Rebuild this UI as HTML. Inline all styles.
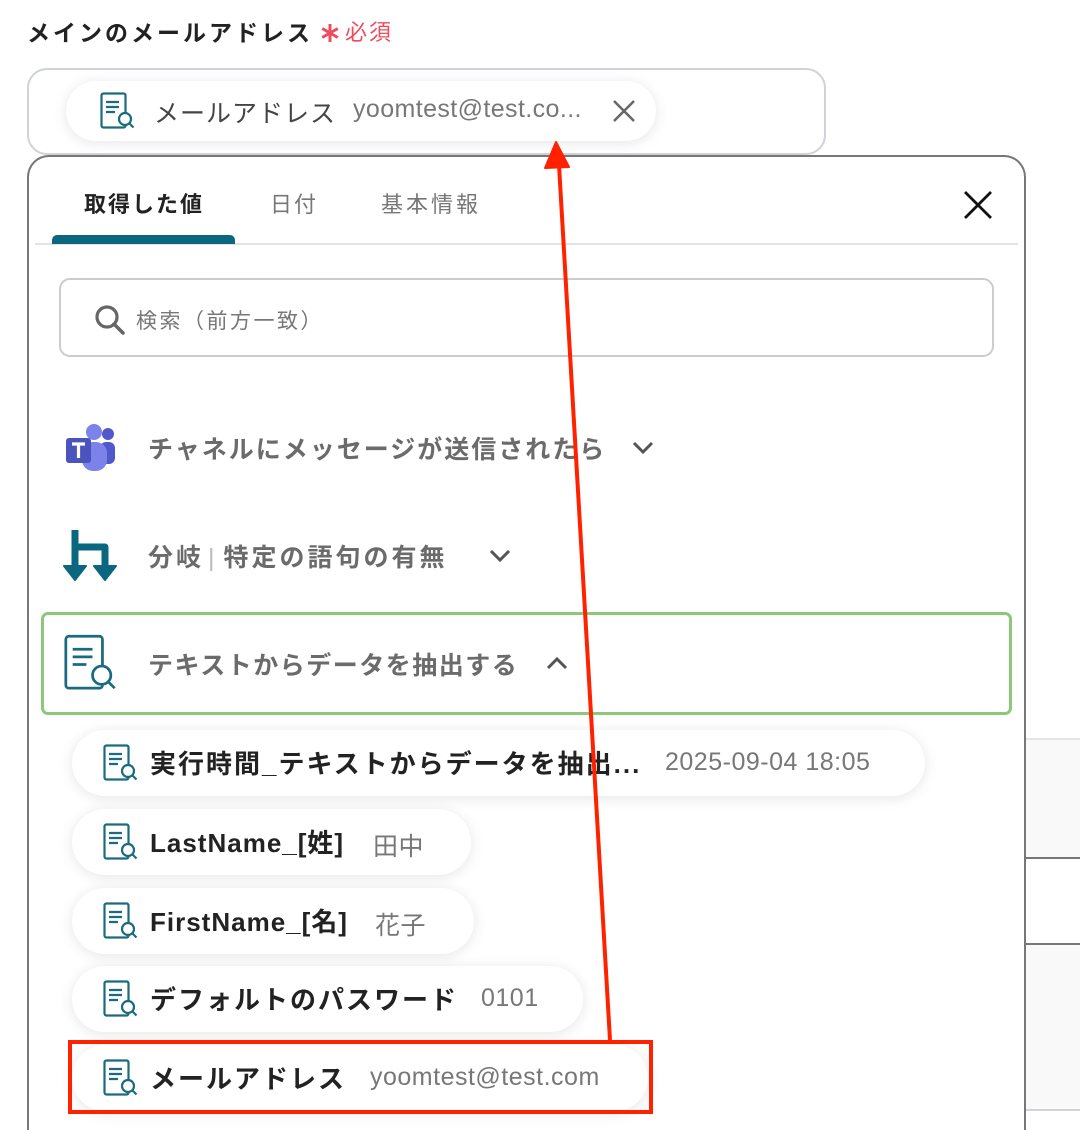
<!DOCTYPE html>
<html style="overflow:hidden"><head><meta charset="utf-8">
<style>
*{margin:0;padding:0;box-sizing:border-box}
html,body{width:1080px;height:1130px;overflow:hidden}
body{background:#fff;position:relative;font-family:"Liberation Sans","Noto Sans CJK JP",sans-serif;color:#222}
.a{position:absolute;white-space:nowrap}
.chip{position:absolute;background:#fff;border-radius:34px;box-shadow:0 2px 14px rgba(0,0,0,.10);height:66px}
.chip svg{position:absolute;left:31px;top:14px}
.chip .t{position:absolute;left:78px;top:14px;font-size:26px;font-weight:bold;color:#222;letter-spacing:2px}
.chip .v{position:absolute;top:18px;font-size:25px;color:#777;letter-spacing:.5px}
.row{position:absolute;font-size:25px;font-weight:bold;color:#6b6b6b;letter-spacing:2px}
</style></head><body>
<svg width="0" height="0" style="position:absolute"><defs>
<symbol id="doc" viewBox="0 0 36 38"><rect x="1.5" y="1.5" width="24" height="34" rx="2" fill="none" stroke="#1a6b80" stroke-width="2.2"/><path d="M6 10h13M6 15h13M6 20h9" stroke="#1a6b80" stroke-width="2.2"/><circle cx="25" cy="27" r="6" fill="#fff" stroke="#1a6b80" stroke-width="2.2"/><path d="M29.5 31.5l4 4" stroke="#1a6b80" stroke-width="2.2"/></symbol>
</defs></svg>

<div class="a" style="left:1025px;top:738px;width:55px;height:120px;background:#f9f9f9;border-top:2px solid #e5e5e5"></div>
<div class="a" style="left:1025px;top:857px;width:55px;height:2px;background:#777"></div>
<div class="a" style="left:1025px;top:943px;width:55px;height:168px;background:#f9f9f9;border-top:2px solid #777;border-bottom:2px solid #d0d4da"></div>

<div class="a" style="left:27px;top:14px;font-size:23px;font-weight:bold;color:#222;letter-spacing:3px">メインのメールアドレス</div>
<svg class="a" style="left:320px;top:23px" width="20" height="20" viewBox="0 0 20 20"><path d="M10 1v18M2.2 5.5l15.6 9M2.2 14.5l15.6-9" stroke="#f04b5c" stroke-width="3"/></svg>
<div class="a" style="left:345px;top:15px;color:#f04b5c;font-size:22px;letter-spacing:2px">必須</div>

<div class="a" style="left:27px;top:68px;width:799px;height:87px;border:2px solid #cfd3d8;border-radius:20px"></div>
<div class="chip" style="left:66px;top:81px;width:590px;height:60px;border-radius:30px">
<svg width="36" height="38" style="left:34px;top:11px"><use href="#doc"/></svg>
<div class="a" style="left:88px;top:13px;font-size:25px;color:#444;letter-spacing:1px">メールアドレス</div>
<div class="a" style="left:287px;top:14px;font-size:25px;color:#777;letter-spacing:.4px">yoomtest@test.co...</div>
<svg class="a" style="left:546px;top:18px" width="24" height="24"><path d="M2 2L22 22M22 2L2 22" stroke="#666" stroke-width="2.5"/></svg>
</div>

<div class="a" style="left:27px;top:155px;width:999px;height:990px;border:2px solid #777;border-bottom:none;border-radius:22px 22px 0 0"></div>
<div class="a" style="left:84px;top:187px;font-size:22px;font-weight:bold;color:#222;letter-spacing:2px">取得した値</div>
<div class="a" style="left:270px;top:187px;font-size:22px;color:#777;letter-spacing:2px">日付</div>
<div class="a" style="left:381px;top:187px;font-size:22px;color:#777;letter-spacing:3px">基本情報</div>
<div class="a" style="left:35px;top:243px;width:983px;height:2px;background:#e3e3e3"></div>
<div class="a" style="left:52px;top:235px;width:183px;height:9px;background:#0b6780;border-radius:5px 5px 0 0"></div>
<svg class="a" style="left:963px;top:190px" width="30" height="30"><path d="M2 2L28 28M28 2L2 28" stroke="#111" stroke-width="2.8"/></svg>

<div class="a" style="left:59px;top:278px;width:935px;height:79px;border:2px solid #ccc;border-radius:11px"></div>
<svg class="a" style="left:93px;top:303px" width="34" height="34"><circle cx="14" cy="14" r="10" fill="none" stroke="#666" stroke-width="3.2"/><path d="M21 21l9 9" stroke="#666" stroke-width="3.6" stroke-linecap="round"/></svg>
<div class="a" style="left:136px;top:305px;font-size:21px;color:#777;letter-spacing:2.5px">検索（前方一致）</div>

<svg class="a" style="left:64px;top:424px" width="52" height="48" viewBox="0 0 52 48">
<circle cx="44" cy="10" r="6" fill="#5059c9"/><rect x="36" y="18" width="15" height="22" rx="6" fill="#5059c9"/>
<circle cx="30" cy="8" r="8" fill="#7b83eb"/><rect x="18" y="18" width="25" height="29" rx="11" fill="#7b83eb"/>
<rect x="2" y="14" width="25" height="25" rx="3" fill="#4b53bc"/><path d="M8 20h13M14.5 20v14" stroke="#fff" stroke-width="3.2"/>
</svg>
<div class="row" style="left:148px;top:430px">チャネルにメッセージが送信されたら</div>
<svg class="a" style="left:632px;top:440px" width="22" height="16"><path d="M2 3l9 9 9-9" fill="none" stroke="#555" stroke-width="3"/></svg>

<svg class="a" style="left:63px;top:528px" width="54" height="54" viewBox="0 0 54 54">
<path d="M12 2v40M12 19h30v23" fill="none" stroke="#0b6780" stroke-width="7" stroke-linejoin="round"/>
<path d="M1 38h22l-11 14zM31 38h22l-11 14z" fill="#0b6780" stroke="#0b6780" stroke-width="2" stroke-linejoin="round"/>
</svg>
<div class="row" style="left:148px;top:538px;letter-spacing:3px">分岐<span style="font-weight:normal;color:#bbb;margin:0 6px 0 4px">|</span>特定の語句の有無</div>
<svg class="a" style="left:489px;top:548px" width="22" height="16"><path d="M2 3l9 9 9-9" fill="none" stroke="#555" stroke-width="3"/></svg>

<div class="a" style="left:41px;top:612px;width:971px;height:103px;border:3px solid #8bc87a;border-radius:7px"></div>
<svg class="a" style="left:63px;top:634px" width="56" height="58" viewBox="0 0 36 38"><rect x="1.5" y="1.5" width="24" height="34" rx="2" fill="none" stroke="#1a6b80" stroke-width="1.8"/><path d="M6 10h13M6 15h13M6 20h9" stroke="#1a6b80" stroke-width="1.8"/><circle cx="25" cy="27" r="6" fill="#fff" stroke="#1a6b80" stroke-width="1.8"/><path d="M29.5 31.5l4 4" stroke="#1a6b80" stroke-width="1.8"/></svg>
<div class="row" style="left:148px;top:646px;letter-spacing:1.5px">テキストからデータを抽出する</div>
<svg class="a" style="left:546px;top:655px" width="22" height="16"><path d="M2 13l9-9 9 9" fill="none" stroke="#555" stroke-width="3"/></svg>

<div class="chip" style="left:72px;top:730px;width:853px"><svg width="36" height="38"><use href="#doc"/></svg><div class="t">実行時間_テキストからデータを抽出...</div><div class="v" style="left:593px">2025-09-04 18:05</div></div>
<div class="chip" style="left:72px;top:809px;width:399px"><svg width="36" height="38"><use href="#doc"/></svg><div class="t" style="letter-spacing:1px">LastName_[姓]</div><div class="v" style="left:301px">田中</div></div>
<div class="chip" style="left:72px;top:888px;width:402px"><svg width="36" height="38"><use href="#doc"/></svg><div class="t" style="letter-spacing:1px">FirstName_[名]</div><div class="v" style="left:303px">花子</div></div>
<div class="chip" style="left:72px;top:966px;width:511px"><svg width="36" height="38"><use href="#doc"/></svg><div class="t">デフォルトのパスワード</div><div class="v" style="left:409px">0101</div></div>
<div class="chip" style="left:72px;top:1045px;width:576px"><svg width="36" height="38"><use href="#doc"/></svg><div class="t">メールアドレス</div><div class="v" style="left:298px">yoomtest@test.com</div></div>
<div class="a" style="left:68px;top:1040px;width:585px;height:74px;border:4px solid #ff2200"></div>

<svg class="a" style="left:0;top:0" width="1080" height="1130">
<path d="M610 1040L559 165" stroke="#ff2200" stroke-width="4"/>
<path d="M556 142L545 168L569 167Z" fill="#ff2200" stroke="#ff2200" stroke-width="2" stroke-linejoin="round"/>
</svg>
</body></html>
